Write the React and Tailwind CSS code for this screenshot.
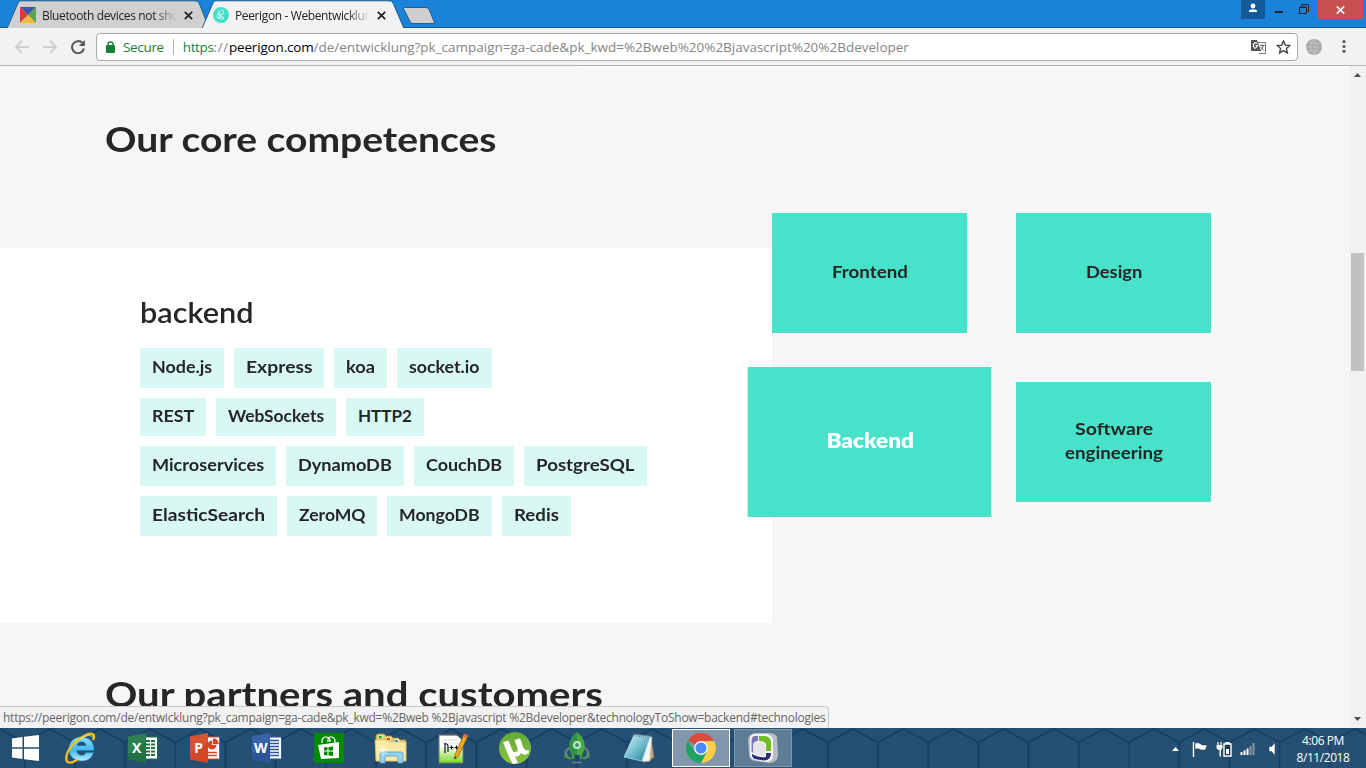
import { useLayoutEffect, useRef } from "react";

// Text tracked at run time so that it fills the given width.
function Fit({ w, className = "", children }) {
  const ref = useRef(null);
  useLayoutEffect(() => {
    const el = ref.current;
    el.style.letterSpacing = "0px";
    const natural = el.offsetWidth;
    el.style.letterSpacing = `${(w - natural) / el.textContent.length}px`;
  }, [w]);
  return (
    <span ref={ref} className={`inline-block shrink-0 whitespace-pre ${className}`}>
      {children}
    </span>
  );
}

// Text whose glyphs are widened to fill the given width.
function Wide({ w, className = "", children }) {
  const box = useRef(null);
  const ref = useRef(null);
  useLayoutEffect(() => {
    box.current.style.width = `${w}px`;
    ref.current.style.transform = `scaleX(${w / ref.current.offsetWidth})`;
  }, [w]);
  return (
    <span ref={box} className={`block shrink-0 ${className}`}>
      <span ref={ref} className="inline-block origin-left whitespace-pre">{children}</span>
    </span>
  );
}

const rows = [
  { h: "h-10", items: [["Node.js", 60], ["Express", 66], ["koa", 29], ["socket.io", 71]] },
  { h: "h-[38px]", items: [["REST", 42], ["WebSockets", 96], ["HTTP2", 54]] },
  { h: "h-10", items: [["Microservices", 112], ["DynamoDB", 94], ["CouchDB", 76], ["PostgreSQL", 99]] },
  { h: "h-10", items: [["ElasticSearch", 113], ["ZeroMQ", 66], ["MongoDB", 81], ["Redis", 45]] },
];

function Close() {
  return (
    <svg width="9" height="9" viewBox="0 0 9 9" className="shrink-0">
      <path d="M.8.8l7.4 7.4M8.2.8L.8 8.2" stroke="#222" strokeWidth="1.7" />
    </svg>
  );
}

function TabStrip() {
  return (
    <div className="relative flex h-7 bg-[#1a82d8]">
      <svg className="absolute left-0 top-0" width="1366" height="28" viewBox="0 0 1366 28">
        <path d="M0 27.500H1366" stroke="#17588f" />
        <path d="M7 28.5L18 3Q19 .8 21 .8H195Q198 .8 199 3L209 28" fill="#d0d0d0" stroke="#215d8e" />
        <path d="M202 28.5L213 3Q214 .8 216 .8H389Q392 .8 393 3L404 28.5" fill="#f2f2f2" stroke="#215d8e" />
        <path d="M403.500 8.500Q403 7.500 404.500 7.500H426Q428 7.500 429 9.500L434.500 22.500Q435 23.500 433 23.500H413Q411 23.500 410 21.500Z" fill="#cfcfcf" stroke="#215d8e" />
      </svg>
      <div className="relative flex h-[30px] w-[205px] items-center pl-5">
        <svg width="16" height="16" viewBox="0 0 16 16" className="shrink-0">
          <path d="M0 0H16L8 8Z" fill="#3d57a7" />
          <path d="M0 0L8 8L0 16Z" fill="#d83a3f" />
          <path d="M16 0V16L8 8Z" fill="#57a850" />
          <path d="M0 16L8 8L16 16Z" fill="#f0b93c" />
        </svg>
        <div className="mb-0.5 ml-1.5 w-[136px] overflow-hidden [mask-image:linear-gradient(to_right,black_112px,transparent_135px)]">
          <Fit w={136} className="text-[12px] text-[#222]">Bluetooth devices not sho</Fit>
        </div>
        <div className="ml-1.5 flex"><Close /></div>
      </div>
      <div className="relative flex h-[30px] w-[190px] items-center pl-2">
        <svg width="16" height="16" viewBox="0 0 16 16" className="shrink-0">
          <circle cx="8" cy="8" r="8" fill="#43dfc8" />
          <path d="M5.500 5Q9.500 2 10.800 4.500Q11.300 7 6.800 8.300ZM5.500 5L4.500 10Q4.500 12.500 6.700 11.300L7.200 8.500L11 11L9.500 12.400L6 10" fill="none" stroke="#d9fff8" strokeWidth="1" />
        </svg>
        <div className="mb-0.5 ml-1.5 w-[136px] overflow-hidden [mask-image:linear-gradient(to_right,black_112px,transparent_135px)]">
          <Fit w={136} className="text-[12px] text-[#222]">Peerigon - Webentwicklun</Fit>
        </div>
        <div className="ml-1.5 flex"><Close /></div>
      </div>
      <div className="relative ml-auto flex h-[19px] pr-[3px]">
        <div className="flex w-6 items-center justify-center bg-[#125b98]">
          <svg width="10" height="10" viewBox="0 0 10 10" className="mb-1">
            <circle cx="5" cy="3" r="2.400" fill="#fff" />
            <path d="M1 9V8Q1 6.300 5 6.300T9 8V9Z" fill="#fff" />
          </svg>
        </div>
        <div className="flex w-[27px] items-end justify-center pb-[6px]">
          <div className="h-0.5 w-2 bg-[#222]" />
        </div>
        <div className="flex w-[26px] items-center justify-center">
          <svg width="10" height="10" viewBox="0 0 10 10" className="mb-px mr-0.5">
            <path d="M.5 3.500H7.500V9.500H.5ZM.5 3H7.500M2.500 2V.5H9.500V7.500H8.500" fill="none" stroke="#222" />
          </svg>
        </div>
        <div className="flex w-[45px] items-center justify-center bg-[#c75050]">
          <svg width="9" height="8" viewBox="0 0 9 8">
            <path d="M.8.5L8.200 7.500M8.200.5L.8 7.500" stroke="#fff" strokeWidth="1.700" />
          </svg>
        </div>
      </div>
    </div>
  );
}

function Toolbar() {
  return (
    <div className="flex h-[38px] items-center border-b border-[#b5b5b5] bg-[#f2f2f2]">
      <svg className="ml-[14px]" width="15" height="14" viewBox="0 0 15 14">
        <path d="M15 7H2M8 1L2 7L8 13" fill="none" stroke="#d0d0d0" strokeWidth="1.900" />
      </svg>
      <svg className="ml-[14px]" width="15" height="14" viewBox="0 0 15 14">
        <path d="M0 7H13M7 1L13 7L7 13" fill="none" stroke="#d0d0d0" strokeWidth="1.900" />
      </svg>
      <svg className="ml-[13px]" width="14" height="14" viewBox="0 0 14 14">
        <path d="M11.600 3.200A6 6 0 1 0 12.900 8.500" fill="none" stroke="#555" strokeWidth="2" />
        <path d="M13.900 0V6H7.900Z" fill="#555" />
      </svg>
      <div className="ml-[11px] flex h-7 w-[1202px] items-center rounded-sm border border-[#a9a9a9] bg-white pl-[9px]">
        <svg width="9" height="12" viewBox="0 0 9 12" className="shrink-0">
          <rect y="4" width="9" height="8" rx="1" fill="#188038" />
          <path d="M2 5V3Q2 1 4.500 1T7 3V5" fill="none" stroke="#188038" strokeWidth="1.400" />
        </svg>
        <Fit w={41} className="ml-2 mt-px text-[13.500px] text-[#188038]">Secure</Fit>
        <div className="ml-[9px] h-4 w-px bg-[#b0b0b0]" />
        <div className="ml-[9px] mt-px flex text-[13.500px]">
          <Fit w={31} className="text-[#188038]">https</Fit>
          <Fit w={15} className="text-[#858585]">://</Fit>
          <Fit w={85} className="text-black">peerigon.com</Fit>
          <Fit w={595} className="text-[#858585]">/de/entwicklung?pk_campaign=ga-cade&pk_kwd=%2Bweb%20%2Bjavascript%20%2Bdeveloper</Fit>
        </div>
        <svg className="ml-auto" width="15" height="14" viewBox="0 0 15 14">
          <path d="M5.500 2.500H14.500V13.500H8" fill="#fff" stroke="#777" />
          <path d="M0 0H6L10 11H0Z" fill="#555" />
          <path d="M6.300 3.500Q4.500 2.200 3 3.500T3 7.300T6.500 5.500H4.500" fill="none" stroke="#fff" strokeWidth="1.100" />
          <path d="M9 5.500H13.500M11.200 4.200V5.500M12.500 5.500Q11.800 8.500 9.800 9.800M9.500 7L13 10.500" fill="none" stroke="#666" strokeWidth="1" />
        </svg>
        <svg className="ml-[10px] mr-[6px]" width="15" height="14" viewBox="0 0 15 14">
          <path d="M7.500 1L9.300 5.100L13.800 5.500L10.400 8.500L11.400 12.900L7.500 10.600L3.600 12.900L4.600 8.500L1.200 5.500L5.700 5.100Z" fill="none" stroke="#444" strokeWidth="1.400" />
        </svg>
      </div>
      <svg className="ml-2" width="16" height="16" viewBox="0 0 16 16">
        <circle cx="8" cy="8" r="8" fill="#a7a7a7" />
        <path d="M0 8H16M1.500 4H14.500M1.500 12H14.500M8 0V16M8 0Q1 8 8 16M8 0Q15 8 8 16" fill="none" stroke="#c5c5c5" strokeWidth=".9" />
      </svg>
      <svg className="ml-5" width="4" height="13" viewBox="0 0 4 13">
        <circle cx="2" cy="1.700" r="1.600" fill="#5a5a5a" />
        <circle cx="2" cy="6.500" r="1.600" fill="#5a5a5a" />
        <circle cx="2" cy="11.300" r="1.600" fill="#5a5a5a" />
      </svg>
    </div>
  );
}

function Card({ children, active }) {
  return (
    <div
      className={
        "flex h-[120px] w-[195px] flex-col items-center justify-center bg-[#48e2ca] pb-0.5 text-[17px] leading-6 " +
        (active ? "scale-125 font-extrabold text-white" : "font-bold text-[#262626]")
      }
    >
      {children}
    </div>
  );
}

function Page() {
  return (
    <div className="relative flex h-[662px] overflow-hidden bg-[#f4f6f8] font-[Lato,sans-serif] text-[#262626]">
      <div className="w-[1349px] shrink-0">
        <div className="ml-[577px] h-0.5 bg-white" />
        <div className="flex h-[145px] items-start pl-[105px] pt-12">
          <Wide w={391} className="text-[35px] font-bold leading-[44px]">Our core competences</Wide>
        </div>
        <div className="flex items-start">
          <div className="mt-[35px] h-[375px] w-[772px] bg-white pl-[140px] pt-[46px]">
            <Wide w={114} className="text-[28px] font-semibold leading-9">backend</Wide>
            <div className="mt-[18px] flex flex-col gap-2.5">
              {rows.map((r, i) => (
                <div key={i} className="flex gap-2.5">
                  {r.items.map(([t, w]) => (
                    <div key={t} className={"flex items-center bg-[#d8f8f3] px-3 pb-0.5 text-[17px] font-bold " + r.h}>
                      <Wide w={w}>{t}</Wide>
                    </div>
                  ))}
                </div>
              ))}
            </div>
          </div>
          <div className="grid grid-cols-[195px_195px] gap-[49px]">
            <Card><Wide w={76}>Frontend</Wide></Card>
            <Card><Wide w={56}>Design</Wide></Card>
            <Card active><Wide w={70}>Backend</Wide></Card>
            <Card><Wide w={78}>Software</Wide><Wide w={98}>engineering</Wide></Card>
          </div>
        </div>
        <div className="flex pl-[105px] pt-12">
          <Wide w={498} className="text-[35px] font-bold leading-[44px]">Our partners and customers</Wide>
        </div>
      </div>
      <div className="flex w-[17px] flex-col items-center bg-[#f1f1f1] pt-[7px] pb-[7px]">
        <svg width="7" height="4" viewBox="0 0 7 4"><path d="M0 4L3.500 0L7 4Z" fill="#505050" /></svg>
        <div className="mt-[176px] h-[118px] w-[13px] bg-[#c1c1c1]" />
        <svg className="mt-auto" width="7" height="4" viewBox="0 0 7 4"><path d="M0 0L3.500 4L7 0Z" fill="#505050" /></svg>
      </div>
      <div className="absolute bottom-0 left-0 flex h-[22px] w-[829px] items-center rounded-tr border-r border-t border-[#c8c8c8] bg-[#f2f2f2] pl-[3px] font-['Open_Sans',sans-serif] text-[12px] text-[#666]">
        <Fit w={822}>https://peerigon.com/de/entwicklung?pk_campaign=ga-cade&pk_kwd=%2Bweb %2Bjavascript %2Bdeveloper&technologyToShow=backend#technologies</Fit>
      </div>
    </div>
  );
}

function OfficeIcon({ letter, color, dark, children }) {
  return (
    <svg width="30" height="30" viewBox="0 0 30 30">
      <rect x="14" y="4" width="15.500" height="22" fill="#fff" stroke={color} />
      {children}
      <path d="M0 3.500L18 0V30L0 26.500Z" fill={color} />
      <path d="M0 3.500L18 0V9L0 21Z" fill={dark} opacity=".35" />
      <text x="8.700" y="20" textAnchor="middle" fontSize="14" fontWeight="700" fill="#fff" fontFamily="Open Sans, sans-serif">{letter}</text>
    </svg>
  );
}

const icons = [
  <svg width="27" height="26" viewBox="0 0 27 26">
    <path d="M0 3.500L10.500 2V12.300H0ZM12 1.800L27 0V12.300H12ZM0 13.700H10.500V24L0 22.500ZM12 13.700H27V26L12 24.200Z" fill="#fff" />
  </svg>,
  <svg width="32" height="32" viewBox="0 0 32 32">
    <defs><linearGradient id="ie" x2="0" y2="1"><stop stopColor="#8ce2fc" /><stop offset=".55" stopColor="#43b7ef" /><stop offset="1" stopColor="#b7edff" /></linearGradient></defs>
    <path d="M16 5C9 5 4 10 4 17s5 12 13 12c6 0 10-3 11.500-8.500H21c-1 2-2.300 2.800-4.300 2.800-3 0-4.800-1.800-5-4.800H29C29.500 10 24 5 16 5ZM12 13.700c.5-2.500 2-4 4.500-4s4.200 1.500 4.600 4Z" fill="url(#ie)" stroke="#1683c6" strokeWidth=".6" />
    <path d="M28 8C31 2 27-.5 19 4 9 9 1 19 1.300 27c.3 5 5 4.500 11 .8" fill="none" stroke="#f2c01c" strokeWidth="2.400" />
    <path d="M27.500 5C26 2 20 4 15 7" fill="none" stroke="#fff09b" strokeWidth=".8" />
  </svg>,
  <OfficeIcon letter="X" color="#217346" dark="#4c9a68">
    <path d="M18 8H27M18 11.500H27M18 15H27M18 18.500H27M18 22H27" stroke="#217346" strokeWidth="2.200" />
    <path d="M22.500 5V25" stroke="#fff" />
  </OfficeIcon>,
  <OfficeIcon letter="P" color="#d24726" dark="#e4694b">
    <path d="M22 7.500A4.500 4.500 0 1 0 26.500 12H22Z" fill="#d24726" />
    <path d="M23.500 6V10.500H28Q27.500 6.500 23.500 6M18 19.500H27M18 22.500H27" fill="#d24726" stroke="#d24726" strokeWidth="1.300" />
  </OfficeIcon>,
  <OfficeIcon letter="W" color="#2b579a" dark="#4c7ac4">
    <path d="M18 7.500H27M18 10.500H27M18 13.500H27M18 16.500H27M18 19.500H27M18 22.500H27" stroke="#2b579a" strokeWidth="1.500" />
  </OfficeIcon>,
  <svg width="30" height="30" viewBox="0 0 30 30">
    <rect width="30" height="30" fill="#008a00" />
    <path d="M8 10V8Q8 4 12 4T16 8V9M14 9V6Q15 3 18 4T21 8V10" fill="none" stroke="#fff" strokeWidth="1.200" />
    <path d="M4 12L25 9V25L7 26Z" fill="#fff" />
    <path d="M10 14.500L13.500 14V17.500H10ZM14.500 14L19 13.500V17.500H14.500ZM10 18.500H13.500V22.500L10 22ZM14.500 18.500H19V23L14.500 22.500Z" fill="#008a00" />
  </svg>,
  <svg width="34" height="32" viewBox="0 0 34 32">
    <path d="M2 5Q2 2 4 2H10L12 4H17L19 6H24L26 8H31Q32 8 32 10V29H2Z" fill="#e9c768" stroke="#b59746" strokeWidth=".7" />
    <path d="M5 3.500H9V6H5ZM13 5.500H17V8H13ZM21 7.500H25V10H21Z" fill="#fff" />
    <path d="M5 4H8V6H5Z" fill="#22ad3c" /><path d="M13 6H16V8H13Z" fill="#d24d28" /><path d="M21 8H24V10H21Z" fill="#2692d9" />
    <path d="M1 8H13L15 10H32V29H2Z" fill="#f9e9a5" stroke="#d9bf6b" strokeWidth=".7" />
    <path d="M6 31V22Q6 20 8 20H27Q29 20 29 22V31H24V26Q24 24 22 24H13Q11 24 11 26V31Z" fill="#8fd1ee" stroke="#579fc6" strokeWidth=".8" />
    <path d="M9 13V24M4 18H14M5.500 15L12.500 22M12.500 15L5.500 22" stroke="#fff" strokeWidth=".8" />
  </svg>,
  <svg width="32" height="33" viewBox="0 0 32 33">
    <defs><linearGradient id="np" x2="0" y2="1"><stop offset=".4" stopColor="#fff" /><stop offset="1" stopColor="#72db16" /></linearGradient></defs>
    <path d="M2 3H20L26 9V31H2Z" fill="url(#np)" stroke="#777" />
    <path d="M4 2.500H20" stroke="#555" strokeDasharray="1.500 1.500" strokeWidth="2" />
    <path d="M5 8H20M5 11H22M5 23H16M5 27H14" stroke="#cfcfcf" strokeWidth=".7" />
    <path d="M8 21V11M8 12H9.500Q11 12 11 14V20M12.500 15.500H16.500M14.500 13.500V17.500M17.500 15.500H21.500M19.500 13.500V17.500" fill="none" stroke="#111" strokeWidth="1.200" />
    <path d="M27 2L31 4L21 25L17.500 27L18 23Z" fill="#efa91d" stroke="#88530d" strokeWidth=".7" />
    <path d="M27.500 1.500L31.500 3.500L30 6L26 4Z" fill="#d66358" />
    <path d="M17.500 27L18 24.500L19.500 25.500Z" fill="#222" />
  </svg>,
  <svg width="32" height="32" viewBox="0 0 32 32">
    <defs><linearGradient id="ut" x2="0" y2="1"><stop stopColor="#63aa36" /><stop offset="1" stopColor="#8ac33e" /></linearGradient></defs>
    <circle cx="16" cy="16" r="16" fill="url(#ut)" />
    <path d="M4 10L9.500 8.500L13 17.500Q14.500 21 17 20Q19.500 19 18.300 15.500L15.500 8L21 6.500L24.500 16Q26 19.500 30 18L29.500 21.500Q25 24 21.800 21Q20.500 25 16 24.500L19 31L14 32Q8.500 23 4 10Z" fill="#fff" />
  </svg>,
  <svg width="26" height="32" viewBox="0 0 26 32">
    <path d="M2 26Q0 18 6 16M24 26Q26 18 20 16" fill="none" stroke="#5f7a83" strokeWidth="2.500" />
    <path d="M3 21Q1 26 7 26.500M23 21Q25 26 19 26.500M9 23V27M17 23V27" fill="none" stroke="#4ba143" strokeWidth="2" />
    <path d="M13 0Q5 6 5 16L8 23H18L21 16Q21 6 13 0Z" fill="#48a843" />
    <path d="M13 0Q5 6 5 16L8 23H13Z" fill="#329244" />
    <circle cx="13" cy="13" r="4" fill="#bde8c8" /><circle cx="13" cy="13" r="2" fill="#45926a" />
    <path d="M8 30.500H18" stroke="#5c8286" strokeWidth="1.500" />
  </svg>,
  <svg width="32" height="32" viewBox="0 0 32 32">
    <defs><linearGradient id="nt" x2="1" y2="1"><stop stopColor="#d7f6fc" /><stop offset=".5" stopColor="#72bfd1" /><stop offset="1" stopColor="#1c7389" /></linearGradient></defs>
    <path d="M28 5L31 25L25 30Z" fill="#c9a565" />
    <path d="M12 3L29 5L27 29L20 30Z" fill="#f1f3ee" stroke="#9aabab" strokeWidth=".6" />
    <path d="M11 3L27 5L19 29L1 25Z" fill="url(#nt)" stroke="#aedce5" strokeWidth=".8" />
    <path d="M12 3L28 5" stroke="#7d9195" strokeDasharray="1 1" strokeWidth="3" />
  </svg>,
];

const chromeIcon = (
  <svg width="30" height="30" viewBox="0 0 30 30">
    <path d="M15 15L2 7.500A15 15 0 0 1 28 7.500L15 8.500Z" fill="#dd4b3e" />
    <path d="M2 7.500A15 15 0 0 0 15 30L21.500 18.500L15 15L8.500 18.500Z" fill="#1da462" />
    <path d="M15 8.200H28.300A15 15 0 0 1 15 30L21.500 18Z" fill="#ffcd46" />
    <circle cx="15" cy="15" r="6.900" fill="#f2f2f2" /><circle cx="15" cy="15" r="5.500" fill="#4c8bf5" />
  </svg>
);

const pcIcon = (
  <svg width="30" height="32" viewBox="0 0 30 32">
    <path d="M8 1H21Q27 1 29 5L30 24Q29 30 22 31L7 29Q1 28 1 22L0 8Q0 2 8 1Z" fill="#b9bec2" />
    <path d="M6 2H18Q24 3 25 8V23Q25 29 19 30L7 28Q2 27 2 21V7Q2 3 6 2Z" fill="#f6f6f6" />
    <path d="M10 4Q4 3 3.500 8V20L6 21V12Q6 9 10 9Z" fill="#7c77b9" />
    <path d="M11 4H17Q23 5 23 10V19H18V12Q17 9 11 9Z" fill="#70bd20" />
    <path d="M4 22V24Q5 27 9 27.500L17 28.500Q23 28 23 21H18V25Q12 26 4 22Z" fill="#29307d" />
    <path d="M8 10H14Q17 11 17 14V24L9 23Q5 22 5 18V13Q5 10 8 10Z" fill="#e4e4e6" />
  </svg>
);

function Taskbar() {
  return (
    <div className="relative flex h-10 items-center overflow-hidden bg-[#255073] font-['Open_Sans',sans-serif]">
      <svg className="absolute left-0 top-0" width="1366" height="40">
        <defs>
          <pattern id="hex" width="50.200" height="40" patternUnits="userSpaceOnUse" x="-.5">
            <path d="M0 1L25.100 14.500L50.200 1M25.100 14.500V40" fill="none" stroke="#123c61" strokeWidth="1.500" />
          </pattern>
        </defs>
        <rect width="1366" height="40" fill="url(#hex)" />
      </svg>
      <div className="relative flex items-center">
        {icons.map((ic, i) => (
          <div key={i} className={"flex items-center justify-center " + (i === 0 ? "w-[50px]" : "w-[62px]")}>{ic}</div>
        ))}
        <div className="ml-0.5 flex h-[38px] w-[58px] items-center justify-center border border-white bg-[#8297ab]">{chromeIcon}</div>
        <div className="ml-1 flex h-[38px] w-[58px] items-center justify-center border border-[#8196a9] bg-[#5f7c95]">{pcIcon}</div>
      </div>
      <div className="relative ml-auto flex items-center text-white">
        <svg className="mt-0.5" width="7" height="4" viewBox="0 0 7 4"><path d="M0 4L3.500 0L7 4Z" fill="#fff" /></svg>
        <svg className="ml-[13px] mt-0.5" width="16" height="15" viewBox="0 0 16 15">
          <path d="M1.500 0V15" stroke="#fff" strokeWidth="1.500" />
          <path d="M3 1Q6 0 9 2L10 3H15L13.500 8H9Q6 6 3 7Z" fill="#fff" stroke="#1b2f41" strokeWidth=".5" />
        </svg>
        <svg className="ml-2 mt-0.5" width="16" height="15" viewBox="0 0 16 15">
          <path d="M2 0V3M5 0V3" stroke="#fff" strokeWidth="1.200" />
          <path d="M.5 3H6.500V6L5 8V14.500H3.500V8H2L.5 6Z" fill="#fff" />
          <path d="M10 2V.7H13V2M8 2H15V14H8Z" fill="#1b3954" stroke="#fff" strokeWidth="1.400" /><path d="M10 7H13V12H10Z" fill="#fff" />
        </svg>
        <svg className="ml-[8px] mt-0.5" width="16" height="12" viewBox="0 0 16 12">
          <path d="M1.500 12V9M4.500 12V7.500M7.500 12V5.500" stroke="#fff" strokeWidth="2" />
          <path d="M10.500 12V3M13.500 12V0" stroke="#8d969e" strokeWidth="2" />
        </svg>
        <svg className="ml-3 mt-0.5" width="8" height="14" viewBox="0 0 8 14">
          <path d="M1 4.500H3.500L7 .5V13.500L3.500 9.500H1Z" fill="#fff" stroke="#1b2f41" strokeWidth=".5" />
        </svg>
        <div className="ml-[20px] mr-4 mt-0.5 flex w-[54px] flex-col items-center text-[12px] leading-[17px]">
          <Fit w={42}>4:06 PM</Fit>
          <Fit w={53}>8/11/2018</Fit>
        </div>
      </div>
    </div>
  );
}

export default function App() {
  return (
    <div className="h-[768px] w-[1366px] overflow-hidden font-['Open_Sans',sans-serif]">
      <TabStrip />
      <Toolbar />
      <Page />
      <Taskbar />
    </div>
  );
}
